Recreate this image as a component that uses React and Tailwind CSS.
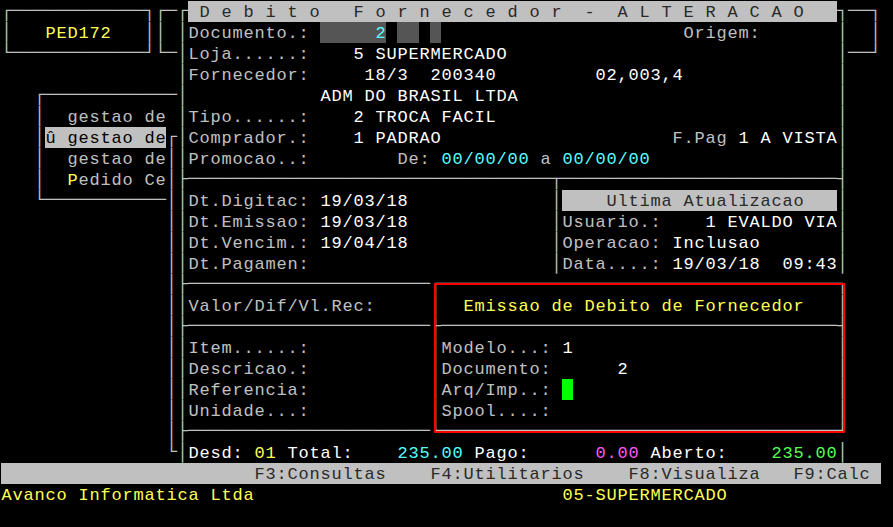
import React from 'react';

const COLS = 80;
const ROWS = 25;

// cell colour classes
const L = 'text-[#c0c0c0]';
const G = 'text-[#c0c0c0]';
const W = 'text-white';
const Y = 'text-[#ffff55]';
const C = 'text-[#55ffff]';
const M = 'text-[#ff55ff]';
const N = 'text-[#55ff55]';
const BAR = 'bg-[#c0c0c0] text-[#2a2a2a]';
const SEL = 'bg-[#c0c0c0] text-black';
const DK = 'bg-[#555555] text-[#55ffff]';
const CUR = 'bg-[#00ff00]';

const BOX = new Set(['─', '│', '┌', '┐', '└', '┘', '├', '┤', '┬']);

const spaced = (s) => s.split('').join(' ');

function buildScreen() {
  const g = Array.from({ length: ROWS }, () =>
    Array.from({ length: COLS }, () => ({ ch: ' ', cls: '' }))
  );
  const put = (r, c, s, cls = '') => {
    [...s].forEach((ch, i) => {
      if (c + i < COLS) g[r][c + i] = { ch, cls };
    });
  };
  const hr = (n) => '─'.repeat(n);

  // program box + box behind the window
  put(0, 0, '┌' + hr(12) + '┐', L);
  put(1, 0, '│', L);
  put(1, 4, 'PED172', Y);
  put(1, 13, '│', L);
  put(2, 0, '└' + hr(12) + '┘', L);
  put(0, 14, '┌─', L);
  put(1, 14, '│', L);
  put(2, 14, '└─', L);
  put(0, 77, '──┐', L);
  put(1, 79, '│', L);
  put(2, 77, '──┘', L);

  // menu box
  put(4, 3, '┌' + hr(12), L);
  for (let r = 5; r <= 8; r++) put(r, 3, '│', L);
  put(5, 6, 'gestao de', G);
  put(6, 4, 'û gestao de', SEL);
  put(7, 6, 'gestao de', G);
  put(8, 6, 'P', Y);
  put(8, 7, 'edido Ce', G);
  put(9, 3, '└' + hr(11), L);

  // side box
  put(6, 15, '┌', L);
  for (let r = 7; r <= 20; r++) put(r, 15, '│', L);
  put(21, 15, '└', L);

  // main window frame
  for (let r = 1; r <= 21; r++) {
    put(r, 16, '│', L);
    put(r, 76, '│', L);
  }
  put(0, 16, '┌', L);
  put(0, 76, '┐', L);
  const title =
    ' ' + spaced('Debito') + '   ' + spaced('Fornecedor') + '  -  ' + spaced('ALTERACAO') + '   ';
  put(0, 17, title, BAR);

  put(1, 17, 'Documento.:', G);
  put(1, 29, '     2', DK);
  put(1, 36, '  ', DK);
  put(1, 39, ' ', DK);
  put(1, 62, 'Origem:', G);

  put(2, 17, 'Loja......:', G);
  put(2, 32, '5 SUPERMERCADO', W);

  put(3, 17, 'Fornecedor:', G);
  put(3, 33, '18/3', W);
  put(3, 39, '200340', W);
  put(3, 54, '02,003,4', W);

  put(4, 29, 'ADM DO BRASIL LTDA', W);

  put(5, 17, 'Tipo......:', G);
  put(5, 32, '2 TROCA FACIL', W);

  put(6, 17, 'Comprador.:', G);
  put(6, 32, '1 PADRAO', W);
  put(6, 61, 'F.Pag', G);
  put(6, 67, '1 A VISTA', W);

  put(7, 17, 'Promocao..:', G);
  put(7, 36, 'De:', G);
  put(7, 40, '00/00/00', C);
  put(7, 49, 'a', G);
  put(7, 51, '00/00/00', C);

  put(8, 16, '├' + hr(59) + '┤', L);
  put(8, 50, '┬', L);

  // dates + last update
  put(9, 17, 'Dt.Digitac:', G);
  put(9, 29, '19/03/18', W);
  put(10, 17, 'Dt.Emissao:', G);
  put(10, 29, '19/03/18', W);
  put(11, 17, 'Dt.Vencim.:', G);
  put(11, 29, '19/04/18', W);
  put(12, 17, 'Dt.Pagamen:', G);
  for (let r = 9; r <= 12; r++) put(r, 50, '│', L);
  put(9, 51, '    Ultima Atualizacao   ', BAR);
  put(10, 51, 'Usuario.:', G);
  put(10, 64, '1 EVALDO VIA', W);
  put(11, 51, 'Operacao:', G);
  put(11, 61, 'Inclusao', W);
  put(12, 51, 'Data....:', G);
  put(12, 61, '19/03/18  09:43', W);

  // lower left part
  put(13, 16, '├' + hr(22), L);
  put(14, 17, 'Valor/Dif/Vl.Rec:', G);
  put(15, 16, '├' + hr(22), L);
  put(16, 17, 'Item......:', G);
  put(17, 17, 'Descricao.:', G);
  put(18, 17, 'Referencia:', G);
  put(19, 17, 'Unidade...:', G);
  put(20, 16, '├' + hr(22), L);

  // popup
  put(13, 39, '┌' + hr(36) + '┐', L);
  for (let r = 14; r <= 19; r++) {
    put(r, 39, '│', L);
    put(r, 76, '│', L);
  }
  put(14, 42, 'Emissao de Debito de Fornecedor', Y);
  put(15, 39, '├' + hr(36) + '┤', L);
  put(16, 40, 'Modelo...:', G);
  put(16, 51, '1', W);
  put(17, 40, 'Documento:', G);
  put(17, 56, '2', W);
  put(18, 40, 'Arq/Imp..:', G);
  put(18, 51, ' ', CUR);
  put(19, 40, 'Spool....:', G);
  put(20, 39, '└' + hr(36) + '┘', L);

  // totals
  put(21, 17, 'Desd:', W);
  put(21, 23, '01', Y);
  put(21, 26, 'Total:', W);
  put(21, 36, '235.00', C);
  put(21, 43, 'Pago:', W);
  put(21, 54, '0.00', M);
  put(21, 59, 'Aberto:', W);
  put(21, 70, '235.00', N);

  // function key bar + status line
  put(22, 0, ' '.repeat(80), BAR);
  put(22, 23, 'F3:Consultas', BAR);
  put(22, 39, 'F4:Utilitarios', BAR);
  put(22, 57, 'F8:Visualiza', BAR);
  put(22, 72, 'F9:Calc', BAR);
  put(23, 0, 'Avanco Informatica Ltda', Y);
  put(23, 51, '05-SUPERMERCADO', Y);

  return g;
}

const screen = buildScreen();

function Cell({ cell }) {
  const box = BOX.has(cell.ch);
  return (
    <span
      className={`w-[11px] h-[21px] shrink-0 text-center whitespace-pre ${
        box ? 'text-[18.333px] leading-[21px]' : 'text-[17px] leading-[23px]'
      } ${cell.cls}`}
    >
      {cell.ch}
    </span>
  );
}

export default function App() {
  return (
    <div className="relative w-[893px] h-[527px] bg-black pt-px pl-px overflow-hidden font-['Liberation_Mono','DejaVu_Sans_Mono',monospace]">
      {screen.map((row, r) => (
        <div key={r} className="flex h-[21px]">
          {row.map((cell, c) => (
            <Cell key={c} cell={cell} />
          ))}
        </div>
      ))}
      {/* red highlight drawn over the popup */}
      <div className="absolute left-[434px] top-[283px] w-[411px] h-[150px] border-2 border-[#ff0000]" />
    </div>
  );
}
